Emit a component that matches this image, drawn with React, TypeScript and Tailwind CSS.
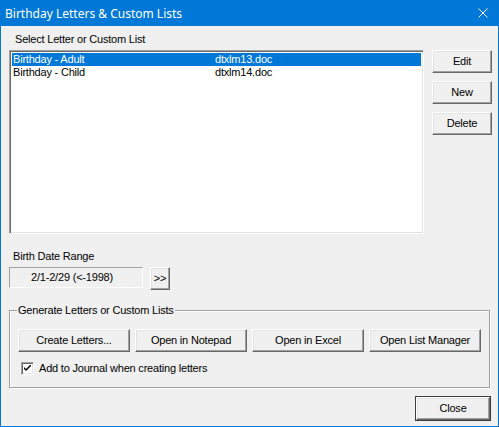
import React from "react";

function Btn({ label, className = "" }: { label: string; className?: string }) {
  return (
    <button
      className={`h-[23px] bg-[#f0f0f0] border border-t-white border-l-white border-b-[#696969] border-r-[#696969] shadow-[inset_-1px_-1px_0_#a0a0a0,inset_1px_1px_0_#e3e3e3] text-[11px] leading-[13px] tracking-[-0.2px] text-black flex items-center justify-center ${className}`}
    >
      {label}
    </button>
  );
}

export default function App() {
  return (
    <div className="w-[499px] h-[427px] bg-[#0078d7] px-px pb-px flex flex-col font-['Liberation_Sans',Arial,sans-serif] text-[11px] leading-[13px] text-black">
      {/* Title bar */}
      <div className="h-[26px] flex items-center pl-[4px] text-white text-[12px] font-['Noto_Sans',sans-serif]">
        <span className="flex-1">Birthday Letters &amp; Custom Lists</span>
        <svg width="10" height="10" viewBox="0 0 10 10" className="mr-[10px]">
          <path d="M0.5 0.5 L9.5 9.5 M9.5 0.5 L0.5 9.5" stroke="white" strokeWidth="1" />
        </svg>
      </div>

      {/* Body */}
      <div className="flex-1 bg-[#f0f0f0] pl-[8px] pt-[7px] flex flex-col tracking-[-0.2px]">
        <div className="pl-[6px] h-[13px]">Select Letter or Custom List</div>

        <div className="flex mt-[4px]">
          <div className="w-[415px] h-[184px] bg-white border border-t-[#a0a0a0] border-l-[#a0a0a0] border-b-white border-r-white shadow-[inset_1px_1px_0_#696969,inset_-1px_-1px_0_#e3e3e3] p-[2px]">
            <div className="h-[13px] bg-[#0078d7] text-white flex">
              <span className="w-[203px] pl-[1px]">Birthday - Adult</span>
              <span>dtxlm13.doc</span>
            </div>
            <div className="h-[13px] flex">
              <span className="w-[203px] pl-[1px]">Birthday - Child</span>
              <span>dtxlm14.doc</span>
            </div>
          </div>
          <div className="ml-[8px] flex flex-col gap-[8px]">
            <Btn label="Edit" className="w-[60px]" />
            <Btn label="New" className="w-[60px]" />
            <Btn label="Delete" className="w-[60px]" />
          </div>
        </div>

        <div className="mt-[16px] pl-[4px] h-[13px]">Birth Date Range</div>

        <div className="mt-[4px] flex items-start">
          <div className="w-[134px] h-[21px] border border-t-[#a0a0a0] border-l-[#a0a0a0] border-b-white border-r-white flex items-center justify-center pr-[8px]">
            2/1-2/29 (&lt;-1998)
          </div>
          <Btn label=">>" className="ml-[7px] w-[20px] h-[20px]" />
        </div>

        <div className="relative mt-[20px] w-[481px] h-[78px] border border-[#a0a0a0] shadow-[inset_1px_1px_0_white,1px_1px_0_white] pl-[8px] pt-[18px]">
          <span className="absolute top-[-7px] left-[7px] px-[1px] bg-[#f0f0f0]">Generate Letters or Custom Lists</span>
          <div className="flex gap-[5px]">
            <Btn label="Create Letters..." className="w-[112px]" />
            <Btn label="Open in Notepad" className="w-[112px]" />
            <Btn label="Open in Excel" className="w-[112px]" />
            <Btn label="Open List Manager" className="w-[112px]" />
          </div>
          <div className="mt-[10px] ml-[3px] flex items-center gap-[5px]">
            <div className="w-[13px] h-[13px] bg-white border border-t-[#a0a0a0] border-l-[#a0a0a0] border-b-white border-r-white shadow-[inset_1px_1px_0_#696969,inset_-1px_-1px_0_#e3e3e3] flex items-center justify-center">
              <svg width="7" height="7" viewBox="0 0 7 7">
                <path d="M0 2 L0 4 L2 6 L7 1 L7 -1 L2 4 Z" fill="black" />
              </svg>
            </div>
            <span>Add to Journal when creating letters</span>
          </div>
        </div>

        <div className="flex justify-end pr-[7px] mt-[8px]">
          <div className="border border-[#3c3c3c]">
            <Btn label="Close" className="w-[74px] h-[21px]" />
          </div>
        </div>
      </div>
    </div>
  );
}
